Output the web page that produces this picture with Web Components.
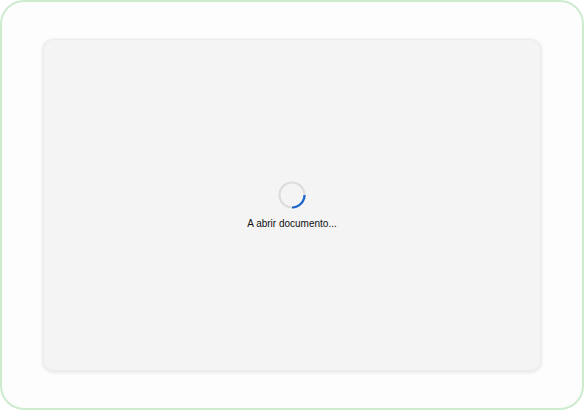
<!DOCTYPE html>
<html>
<head>
<meta charset="utf-8">
<style>
html, body { margin: 0; padding: 0; background: #ffffff; }
</style>
</head>
<body>
<app-frame>
  <doc-loader>A abrir documento...</doc-loader>
</app-frame>
<script>
class AppFrame extends HTMLElement{
    constructor(){
        super();
        this.shadow = this.attachShadow({mode: "open"});
    }
    connectedCallback(){
        this.shadow.innerHTML = `
    <style>
        :host {
            display: block;
            box-sizing: border-box;
            width: 584px;
            height: 410px;
            padding: 37px 41px;
            background: #fdfdfd;
            border: 2px solid #cdeccd;
            border-radius: 24px;
        }
        .card {
            box-sizing: border-box;
            height: 100%;
            background: #f4f4f4;
            border: 1px solid #ececec;
            border-radius: 10px;
            box-shadow: 0 1px 4px rgba(0,0,0,0.12);
            display: flex;
            align-items: center;
            justify-content: center;
        }
    </style>
    <div class="card"><slot></slot></div>
        `
    }
}
class DocLoader extends HTMLElement{
    constructor(){
        super();
        this.shadow = this.attachShadow({mode: "open"});
    }
    connectedCallback(){
        this.shadow.innerHTML = `
    <style>
        :host {
            display: flex;
            flex-direction: column;
            align-items: center;
            gap: 8px;
            font-family: "Liberation Sans", Arial, sans-serif;
            font-size: 10px;
            line-height: 12px;
            color: #111;
        }
        svg { display: block; }
    </style>
    <svg width="30" height="30" viewBox="0 0 30 30">
        <circle cx="15" cy="15" r="12.5" fill="none" stroke="#dcdcdc" stroke-width="2.2"/>
        <path d="M27.5 15A12.5 12.5 0 0 1 15 27.5" fill="none" stroke="#1a66cc" stroke-width="2.2"/>
    </svg>
    <span><slot></slot></span>
        `
    }
}
customElements.define('app-frame', AppFrame);
customElements.define('doc-loader', DocLoader);
</script>
</body>
</html>
